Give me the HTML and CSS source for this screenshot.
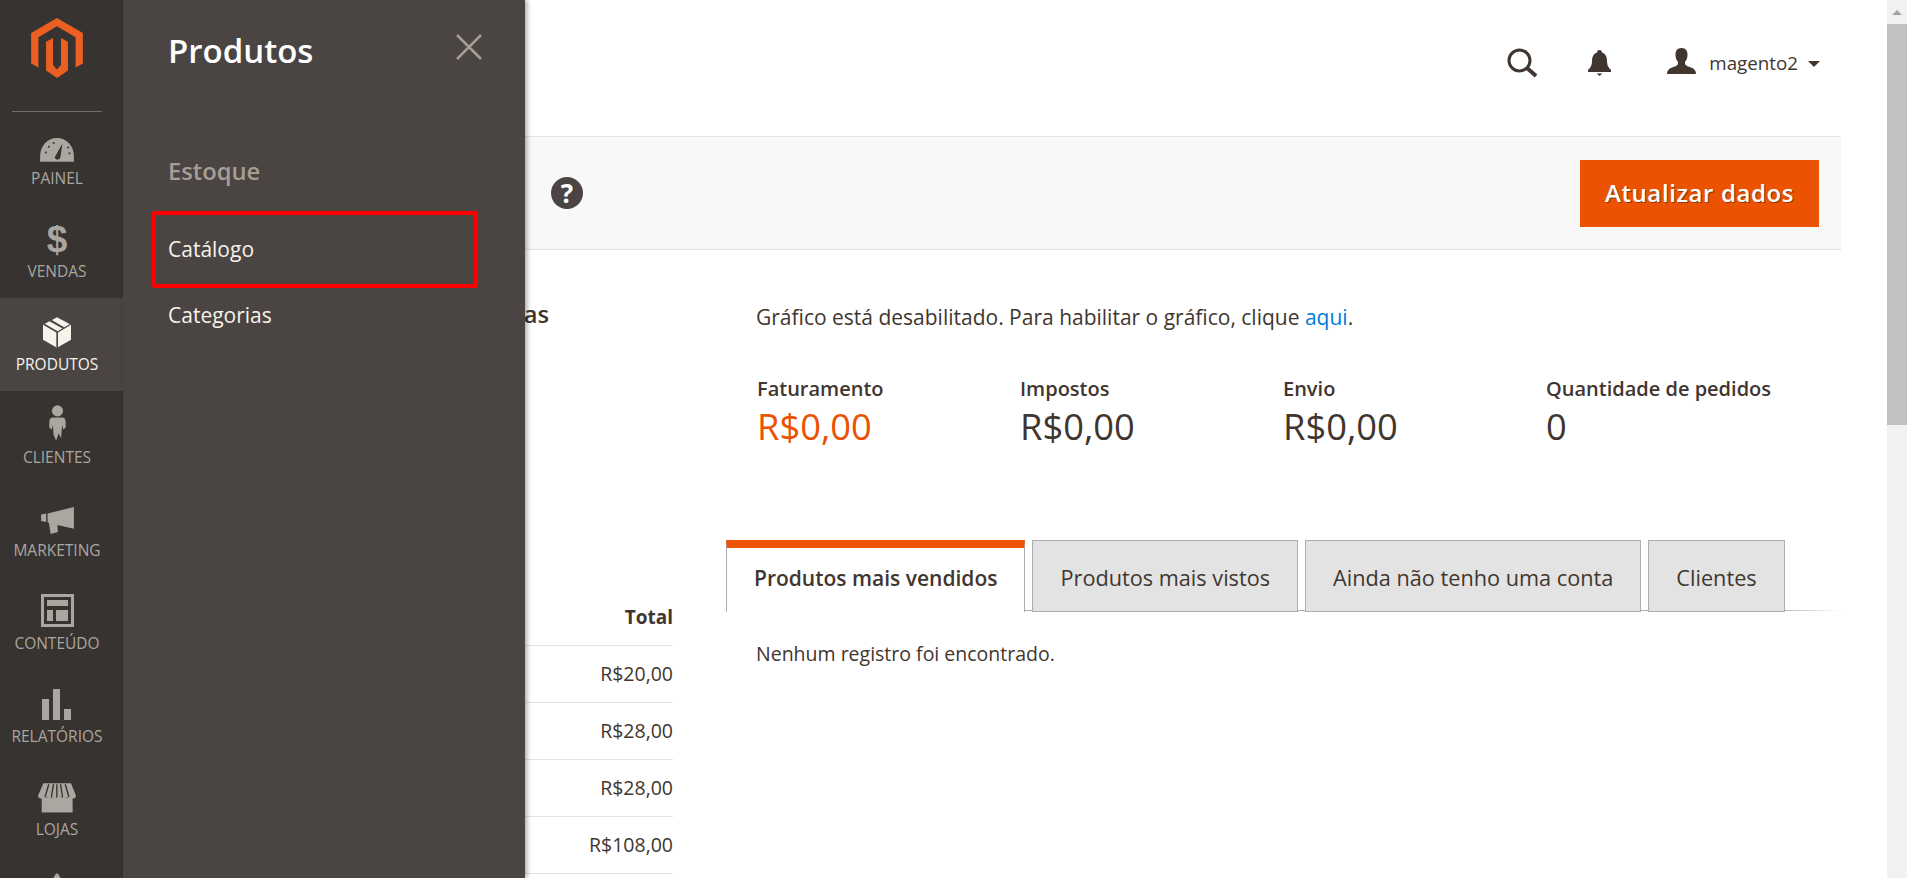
FILE: index.html
```html
<!DOCTYPE html>
<html lang="pt-BR">
<head>
    <meta charset="utf-8">
    <title>Painel</title>
    <link rel="stylesheet" href="styles.css">
</head>
<body>
    <div class="app">
        <!-- Main menu -->
        <nav class="side">
            <div class="side-logo">
                <svg width="52" height="60" viewBox="93 53 156 181">
                    <path fill="#eb5f22" d="M171 53L249 98V190L227 202V111L171 78L115 111V202L93 190V98Z"/>
                    <path fill="#eb5f22" d="M138 125L159 113V195L171 208L183 195V113L204 125V211L171 234L138 211Z"/>
                </svg>
            </div>

            <a class="side-item">
                <span class="side-icon">
                    <svg width="34" height="24" viewBox="120 412 100 71">
                        <path fill="currentColor" d="M120 482V465A50 53 0 0 1 220 465V482Z"/>
                        <path fill="#373330" d="M163 470L186 428L180 470A9 9 0 0 1 163 470Z"/>
                        <circle cx="137" cy="455" r="3" fill="#373330"/>
                        <circle cx="146" cy="438" r="3" fill="#373330"/>
                        <circle cx="160" cy="427" r="3" fill="#373330"/>
                        <circle cx="203" cy="440" r="3" fill="#373330"/>
                        <circle cx="207" cy="457" r="3" fill="#373330"/>
                    </svg>
                </span>
                <span class="side-label">PAINEL</span>
            </a>
            <a class="side-item">
                <span class="side-icon side-dollar">$</span>
                <span class="side-label">VENDAS</span>
            </a>
            <a class="side-item is-active">
                <span class="side-icon">
                    <svg width="28" height="31" viewBox="128 50 84 92">
                        <path fill="currentColor" d="M170 50L212 73V118L170 142L128 118V73Z"/>
                        <path fill="#4a4542" d="M168 142V96L128 73L133 70L172 92L210 70L212 73L173 96V142Z"/>
                        <path fill="#4a4542" d="M147 62L188 85L194 82L153 58Z"/>
                    </svg>
                </span>
                <span class="side-label">PRODUTOS</span>
            </a>
            <a class="side-item">
                <span class="side-icon">
                    <svg width="17" height="36" viewBox="147 314 52 108">
                        <circle cx="173" cy="331" r="17" fill="currentColor"/>
                        <path fill="currentColor" d="M156 351H190Q197 353 198 362V382L191 388L187 374L184 414L176 400L169 422L161 404L159 374L155 388L148 382V362Q149 353 156 351Z"/>
                    </svg>
                </span>
                <span class="side-label">CLIENTES</span>
            </a>
            <a class="side-item">
                <span class="side-icon">
                    <svg width="33" height="27" viewBox="123 620 96 79">
                        <path fill="currentColor" d="M142 639L219 620V684L171 673L172 693L151 699L146 667L142 664Z"/>
                        <path fill="currentColor" d="M123 642L138 639V664L123 661Z"/>
                    </svg>
                </span>
                <span class="side-label">MARKETING</span>
            </a>
            <a class="side-item">
                <span class="side-icon">
                    <svg width="33" height="33" viewBox="0 0 33 33">
                        <path fill="currentColor" fill-rule="evenodd" d="M0 0H33V33H0ZM3 3V30H30V3Z"/>
                        <path fill="currentColor" d="M6 6H27V12H6ZM6 16H12V27H6ZM15 16H27V27H15Z"/>
                    </svg>
                </span>
                <span class="side-label">CONTEÚDO</span>
            </a>
            <a class="side-item">
                <span class="side-icon">
                    <svg width="30" height="31" viewBox="0 0 30 31">
                        <path fill="currentColor" d="M0 10H7V31H0ZM11 0H18V31H11ZM22 20H29V31H22Z"/>
                    </svg>
                </span>
                <span class="side-label">RELATÓRIOS</span>
            </a>
            <a class="side-item">
                <span class="side-icon">
                    <svg width="38" height="30" viewBox="115 555 113 88">
                        <path fill="currentColor" d="M126 599H218V642H126Z"/>
                        <path fill="currentColor" d="M131 555H213L228 592Q226 603 215 600Q208 603 202 597Q194 603 186 597Q178 603 171 597Q164 603 156 597Q148 603 141 597Q134 603 127 600Q117 603 115 592Z"/>
                        <path stroke="#373330" stroke-width="4" fill="none" d="M147 558L136 596M161 558L155 596M171 558V596M182 558L188 596M196 558L207 596"/>
                    </svg>
                </span>
                <span class="side-label">LOJAS</span>
            </a>
            <a class="side-item">
                <span class="side-icon">
                    <svg width="32" height="33" viewBox="0 0 32 33">
                        <path fill="currentColor" d="M16 0L18 2L20 6L25 8L29 12L27 17L29 22L25 26L20 27L19 33H13L12 27L7 26L3 22L5 17L3 12L7 8L12 6L14 2Z"/>
                    </svg>
                </span>
            </a>
        </nav>

        <!-- Dashboard behind the flyout -->
        <div class="page">
            <header class="top">
                <svg class="top-search" width="31" height="30" viewBox="0 0 31 30">
                    <circle cx="12.5" cy="12.5" r="10.5" fill="none" stroke="#41362f" stroke-width="3"/>
                    <path d="M20 20L29 28" stroke="#41362f" stroke-width="4"/>
                </svg>
                <svg class="top-bell" width="23" height="26" viewBox="0 0 23 26">
                    <path fill="#41362f" d="M11.5 0Q14 0 14 2.500Q19 4 19 11Q19 17 23 20V22H0V20Q4 17 4 11Q4 4 9 2.500Q9 0 11.500 0Z"/>
                    <path fill="#41362f" d="M8.500 23.500H14.500L11.500 26Z"/>
                </svg>
                <svg class="top-user" width="29" height="26" viewBox="0 0 29 26">
                    <path fill="#41362f" d="M14.500 0C19 0 20.500 3 20.500 7C20.500 10 19.500 12 18 14V16Q19 18 24 19.500Q29 21 29 26H0Q0 21 5 19.500Q10 18 11 16V14C9.500 12 8.500 10 8.500 7C8.500 3 10 0 14.500 0Z"/>
                </svg>
                <span class="top-name">magento2</span>
                <span class="top-caret"></span>
            </header>

            <div class="actions">
                <span class="help-icon">?</span>
                <button class="refresh">Atualizar dados</button>
            </div>

            <div class="content">
                <section class="orders">
                    <h2 class="orders-title">Últimas vendas</h2>
                    <div class="orders-head">Total</div>
                    <div class="orders-row">R$20,00</div>
                    <div class="orders-row">R$28,00</div>
                    <div class="orders-row">R$28,00</div>
                    <div class="orders-row">R$108,00</div>
                </section>

                <section class="stats">
                    <p class="chart-note">Gráfico está desabilitado. Para habilitar o gráfico, clique <a class="chart-link">aqui</a>.</p>

                    <div class="totals">
                        <div class="total">
                            <div class="total-label">Faturamento</div>
                            <div class="total-value is-revenue">R$0,00</div>
                        </div>
                        <div class="total">
                            <div class="total-label">Impostos</div>
                            <div class="total-value">R$0,00</div>
                        </div>
                        <div class="total">
                            <div class="total-label">Envio</div>
                            <div class="total-value">R$0,00</div>
                        </div>
                        <div class="total">
                            <div class="total-label">Quantidade de pedidos</div>
                            <div class="total-value">0</div>
                        </div>
                    </div>

                    <div class="tabs">
                        <a class="tab is-active">Produtos mais vendidos</a>
                        <a class="tab">Produtos mais vistos</a>
                        <a class="tab">Ainda não tenho uma conta</a>
                        <a class="tab">Clientes</a>
                    </div>
                    <p class="tab-empty">Nenhum registro foi encontrado.</p>
                </section>
            </div>
        </div>

        <!-- Scrollbar of the window -->
        <div class="scrollbar">
            <span class="scrollbar-arrow"></span>
            <span class="scrollbar-thumb"></span>
        </div>

        <!-- Products flyout -->
        <aside class="flyout">
            <div class="flyout-head">
                <h2 class="flyout-title">Produtos</h2>
                <svg class="flyout-close" width="26" height="26" viewBox="0 0 26 26">
                    <path d="M1 1L25 25M25 1L1 25" stroke="#a79d95" stroke-width="2.500"/>
                </svg>
            </div>
            <h3 class="flyout-group">Estoque</h3>
            <a class="flyout-link is-marked">Catálogo</a>
            <a class="flyout-link">Categorias</a>
        </aside>
    </div>
</body>
</html>
```

FILE: styles.css
```css
* {
    box-sizing: border-box;
}

body {
    margin: 0;
    background: #fff;
    color: #41362f;
    font-family: 'Open Sans', sans-serif;
    font-size: 19.5px;
}

.app {
    display: flex;
    position: relative;
    height: 100vh;
    overflow: hidden;
}

/* Main menu */
.side {
    flex: 0 0 123px;
    background: #373330;
    color: #aaa6a0;
}

.side-logo {
    display: flex;
    justify-content: center;
    height: 112px;
    padding: 18px 9px 0 0;
    position: relative;
}

.side-logo::after {
    content: '';
    position: absolute;
    left: 12px;
    right: 21px;
    bottom: 0;
    height: 1px;
    background: #736d66;
}

.side-item {
    display: flex;
    flex-direction: column;
    align-items: center;
    height: 93px;
    padding: 10px 9px 0 0;
}

.side-item.is-active {
    background: #4a4542;
    color: #f7f3eb;
}

.side-icon {
    display: flex;
    align-items: flex-end;
    justify-content: center;
    height: 40px;
}

.side-dollar {
    font-family: 'Liberation Sans', sans-serif;
    font-weight: bold;
    font-size: 37px;
    line-height: 30px;
}

.side-label {
    margin-top: 7px;
    font-size: 15.5px;
    line-height: 18px;
}

/* Flyout */
.flyout {
    position: absolute;
    left: 123px;
    top: 0;
    bottom: 0;
    width: 402px;
    padding: 0 45px;
    background: #4a4542;
    box-shadow: 2px 0 5px rgba(0, 0, 0, .35);
}

.flyout-head {
    display: flex;
    justify-content: space-between;
    height: 147px;
    padding-top: 31px;
    margin-right: -2px;
}

.flyout-title {
    margin: 0;
    color: #fff;
    font-size: 33px;
    font-weight: 600;
    line-height: 40px;
}

.flyout-close {
    margin-top: 3px;
}

.flyout-group {
    margin: 0 0 16px;
    color: #a79d95;
    font-size: 23.75px;
    font-weight: 600;
    line-height: 48px;
}

.flyout-link {
    display: block;
    color: #f7f3eb;
    font-size: 21px;
    line-height: 28px;
    padding-top: 13px;
}

.flyout-link.is-marked {
    margin-left: -16px;
    padding: 20px 0 0 12px;
    border: 4px solid #f00;
    border-radius: 2px;
    width: 326px;
    height: 77px;
}

/* Top bar */
.page {
    flex: 0 0 1718px;
}

.top {
    display: flex;
    justify-content: flex-end;
    align-items: center;
    height: 136px;
    padding-right: 21px;
}

.top-search {
    margin-right: 50px;
    margin-top: -10px;
}

.top-bell {
    margin-right: 56px;
    margin-top: -10px;
}

.top-user {
    margin-right: 13px;
    margin-top: -14px;
}

.top-name {
    margin-right: 10px;
    font-size: 18.75px;
    margin-top: -12px;
}

.top-caret {
    margin-top: -9px;
    border-top: 6px solid #41362f;
    border-left: 6px solid transparent;
    border-right: 6px solid transparent;
}

.actions {
    display: flex;
    justify-content: space-between;
    align-items: center;
    height: 114px;
    padding: 0 22px 0 428px;
    background: #f8f8f8;
    border-top: 1px solid #e3e3e3;
    border-bottom: 1px solid #e3e3e3;
}

.help-icon {
    width: 32px;
    height: 32px;
    border-radius: 50%;
    background: #4a4542;
    color: #fff;
    font-size: 26px;
    font-weight: 700;
    line-height: 32px;
    text-align: center;
}

.refresh {
    width: 239px;
    height: 67px;
    padding-bottom: 2px;
    border: 0;
    background: #eb5202;
    color: #fff;
    font-family: inherit;
    font-size: 24px;
    font-weight: 600;
    letter-spacing: .6px;
    text-shadow: 1px 1px 0 #8a3a0c;
}

/* Dashboard content */
.content {
    display: flex;
    gap: 53px;
    padding-left: 30px;
}

.orders {
    flex: 0 0 520px;
}

.orders-title {
    margin: 46px 0 0;
    padding-right: 124px;
    font-size: 23.75px;
    font-weight: 600;
    line-height: 36px;
    text-align: right;
}

.orders-head {
    margin-top: 263px;
    height: 51px;
    font-size: 19px;
    font-weight: 700;
    line-height: 44px;
    text-align: right;
    border-bottom: 1px solid #e3e3e3;
}

.orders-row {
    height: 57px;
    line-height: 56px;
    text-align: right;
    border-bottom: 1px solid #e3e3e3;
}

.stats {
    flex: 1;
    min-width: 0;
}

.chart-note {
    margin: 55px 0 0 30px;
    font-size: 21px;
    line-height: 24px;
}

.chart-link {
    color: #007bdb;
}

.totals {
    display: flex;
    margin: 48px 0 0 31px;
}

.total {
    flex: 0 0 263px;
}

.total-label {
    font-size: 20px;
    font-weight: 600;
    line-height: 24px;
}

.total-value {
    font-size: 36.3px;
    font-weight: 500;
    line-height: 50px;
}

.total-value.is-revenue {
    color: #eb5202;
}

.tabs {
    display: flex;
    gap: 7px;
    align-items: flex-end;
    margin-top: 89px;
    height: 72px;
    background: linear-gradient(to right, #adadad 94%, #fff) left bottom 1px / 100% 1px no-repeat;
}

.tab {
    height: 72px;
    padding: 0 27px;
    background: #e3e3e3;
    border: 1px solid #adadad;
    line-height: 74px;
    font-size: 21.7px;
}

.tab.is-active {
    background: #fff;
    border-top: 8px solid #eb5202;
    border-bottom: 0;
    font-size: 21px;
    font-weight: 600;
    line-height: 60px;
}

.tab-empty {
    margin: 30px 0 0 30px;
    line-height: 24px;
}

/* Window scrollbar */
.scrollbar {
    position: absolute;
    right: 0;
    top: 0;
    bottom: 0;
    width: 20px;
    background: #f1f1f1;
}

.scrollbar-arrow {
    display: block;
    width: 0;
    margin: 10px auto 0;
    border-bottom: 5px solid #a3a3a3;
    border-left: 5px solid transparent;
    border-right: 5px solid transparent;
}

.scrollbar-thumb {
    display: block;
    margin-top: 9px;
    height: 401px;
    background: #c1c1c1;
}
```
